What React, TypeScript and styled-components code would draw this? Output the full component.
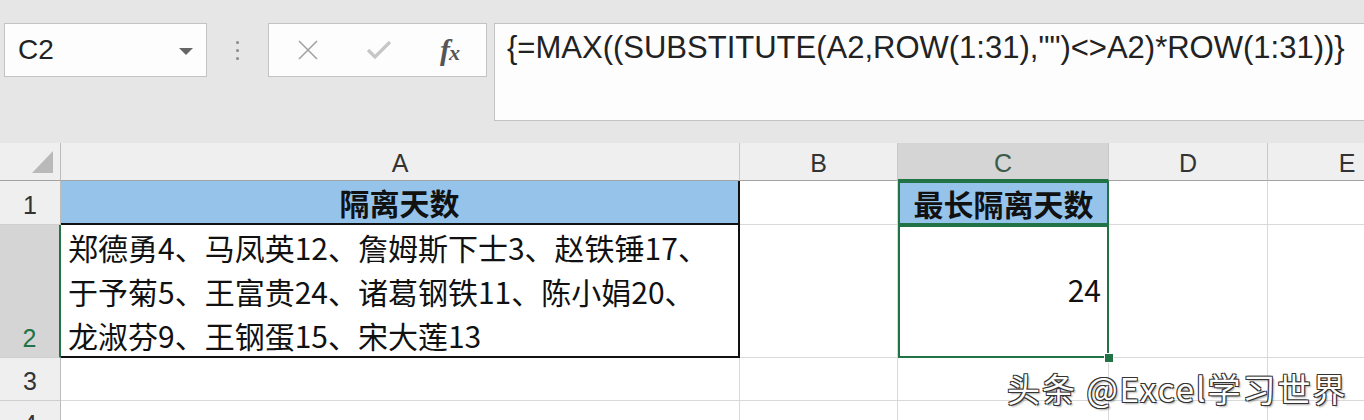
import styled, { createGlobalStyle } from "styled-components";

const GlobalStyle = createGlobalStyle`
  html, body {
    margin: 0;
    padding: 0;
    background: #ffffff;
  }
  body {
    font-family: "Liberation Sans", "Noto Sans CJK SC", sans-serif;
  }
`;

const Page = styled.div`
  position: relative;
  width: 1364px;
  height: 420px;
  overflow: hidden;
  background: #ffffff;
`;

/* ---------- formula bar area ---------- */

const Toolbar = styled.div`
  display: flex;
  align-items: flex-start;
  height: 143px;
  box-sizing: border-box;
  padding: 23px 0 0 4px;
  background: #e6e6e6;
`;

const NameBox = styled.div`
  width: 203px;
  height: 54px;
  box-sizing: border-box;
  display: flex;
  align-items: center;
  justify-content: space-between;
  padding: 0 13px 0 13px;
  background: #fdfdfd;
  border: 1px solid #c3c3c3;
  font-size: 28px;
  color: #222;
`;

const DropArrow = styled.span`
  width: 0;
  height: 0;
  border-left: 7px solid transparent;
  border-right: 7px solid transparent;
  border-top: 7px solid #666;
  margin-top: 2px;
`;

const Grip = styled.div`
  width: 61px;
  height: 54px;
  display: flex;
  flex-direction: column;
  align-items: center;
  justify-content: center;
  gap: 5px;
`;

const GripDot = styled.span`
  width: 3px;
  height: 3px;
  border-radius: 50%;
  background: #8a8a8a;
`;

const FxBox = styled.div`
  width: 219px;
  height: 54px;
  box-sizing: border-box;
  display: flex;
  align-items: center;
  padding-left: 3px;
  background: #fdfdfd;
  border: 1px solid #c3c3c3;
`;

const FxButton = styled.span`
  width: 71px;
  display: flex;
  align-items: center;
  justify-content: center;
`;

const FxLabel = styled.span`
  font-family: "Liberation Serif", serif;
  font-style: italic;
  font-weight: 700;
  font-size: 30px;
  color: #555;
  letter-spacing: -1px;

  small {
    font-size: 22px;
  }
`;

const FormulaBar = styled.div`
  flex: 1;
  height: 98px;
  margin-left: 7px;
  box-sizing: border-box;
  padding: 4px 0 0 12px;
  background: #fdfdfd;
  border: 1px solid #c3c3c3;
  border-right: none;
  font-size: 31px;
  line-height: 40px;
  color: #222;
  white-space: nowrap;
`;

/* ---------- sheet ---------- */

const Sheet = styled.div`
  display: grid;
  grid-template-columns: 61px 679px 158px 211px 159px 159px;
  grid-template-rows: 38px 44px 133px 43px 43px;
  font-family: "Noto Sans CJK SC", sans-serif;
`;

const Corner = styled.div`
  box-sizing: border-box;
  display: flex;
  align-items: flex-end;
  justify-content: flex-end;
  padding: 0 7px 7px 0;
  background: #efefef;
  border-right: 1px solid #bcbcbc;
  border-bottom: 1px solid #a3a3a3;
`;

const ColHeader = styled.div<{ $selected?: boolean }>`
  box-sizing: border-box;
  display: flex;
  justify-content: center;
  padding-top: 3px;
  font-family: "Liberation Sans", sans-serif;
  font-size: 25px;
  line-height: 34px;
  color: ${(p) => (p.$selected ? "#3b5c4b" : "#333")};
  background: ${(p) => (p.$selected ? "#d5d5d5" : "#efefef")};
  border-right: 1px solid #c9c9c9;
  border-bottom: ${(p) => (p.$selected ? "2px solid #217346" : "1px solid #a3a3a3")};
`;

const RowHeader = styled.div<{ $selected?: boolean }>`
  box-sizing: border-box;
  display: flex;
  align-items: flex-end;
  justify-content: center;
  font-family: "Liberation Sans", sans-serif;
  font-size: 25px;
  line-height: 38px;
  color: ${(p) => (p.$selected ? "#217346" : "#333")};
  background: ${(p) => (p.$selected ? "#d5d5d5" : "#efefef")};
  border-right: ${(p) => (p.$selected ? "2px solid #217346" : "1px solid #bcbcbc")};
  border-bottom: 1px solid #cfcfcf;
`;

const Cell = styled.div<{
  $fill?: boolean;
  $bold?: boolean;
  $align?: "left" | "center" | "right";
  $boxed?: boolean;
  $active?: boolean;
}>`
  position: relative;
  box-sizing: border-box;
  display: flex;
  flex-direction: column;
  justify-content: ${(p) => (p.$align === "left" ? "flex-start" : "center")};
  align-items: ${(p) =>
    p.$align === "right" ? "flex-end" : p.$align === "center" ? "center" : "flex-start"};
  padding: ${(p) =>
    p.$align === "right" ? "0 8px 6px 0" : p.$align === "left" ? "0 0 0 7px" : "0"};
  background: ${(p) => (p.$fill ? "#95c3ea" : "#ffffff")};
  font-size: 30px;
  font-weight: ${(p) => (p.$bold ? 700 : 400)};
  line-height: 44px;
  color: #111;
  white-space: nowrap;
  border-right: ${(p) => (p.$boxed ? "2px solid #111" : "1px solid #d9d9d9")};
  border-bottom: ${(p) => (p.$boxed ? "2px solid #111" : "1px solid #d9d9d9")};
  ${(p) =>
    p.$active &&
    `
    border: none;
    box-shadow: inset 0 0 0 2px #217346;
  `}
`;

const FillHandle = styled.span`
  position: absolute;
  right: -5px;
  bottom: -5px;
  width: 8px;
  height: 8px;
  background: #217346;
  border: 1px solid #ffffff;
  z-index: 2;
`;

const Watermark = styled.div`
  position: absolute;
  left: 1007px;
  top: 368px;
  font-family: "Noto Sans CJK SC", sans-serif;
  font-size: 33px;
  line-height: 40px;
  letter-spacing: 2px;
  color: #ffffff;
  white-space: nowrap;
  text-shadow: 1px 1px 0 #333, -1px -1px 0 #333, 1px -1px 0 #333, -1px 1px 0 #333,
    2px 2px 2px rgba(0, 0, 0, 0.35);
`;

const columns = ["A", "B", "C", "D", "E"];

const namesLines = [
  "郑德勇4、马凤英12、詹姆斯下士3、赵铁锤17、",
  "于予菊5、王富贵24、诸葛钢铁11、陈小娟20、",
  "龙淑芬9、王钢蛋15、宋大莲13",
];

const App = () => {
  return (
    <Page>
      <GlobalStyle />
      <Toolbar>
        <NameBox>
          <span>C2</span>
          <DropArrow />
        </NameBox>
        <Grip>
          <GripDot />
          <GripDot />
          <GripDot />
        </Grip>
        <FxBox>
          <FxButton>
            <svg width="22" height="22" viewBox="0 0 22 22">
              <path d="M2 2 L20 20 M20 2 L2 20" stroke="#a3a3a3" strokeWidth="1.6" fill="none" />
            </svg>
          </FxButton>
          <FxButton>
            <svg width="26" height="20" viewBox="0 0 26 20">
              <path d="M2 10 L9 17 L24 2" stroke="#c6c6c6" strokeWidth="3.2" fill="none" />
            </svg>
          </FxButton>
          <FxButton>
            <FxLabel>
              f<small>x</small>
            </FxLabel>
          </FxButton>
        </FxBox>
        <FormulaBar>{'{=MAX((SUBSTITUTE(A2,ROW(1:31),"")<>A2)*ROW(1:31))}'}</FormulaBar>
      </Toolbar>

      <Sheet>
        <Corner>
          <svg width="21" height="22" viewBox="0 0 21 22">
            <polygon points="21,0 21,22 0,22" fill="#b9b9b9" />
          </svg>
        </Corner>
        {columns.map((c) => (
          <ColHeader key={c} $selected={c === "C"}>
            {c}
          </ColHeader>
        ))}

        <RowHeader>1</RowHeader>
        <Cell $fill $bold $align="center" $boxed>
          隔离天数
        </Cell>
        <Cell />
        <Cell $fill $bold $align="center" $active>
          最长隔离天数
        </Cell>
        <Cell />
        <Cell />

        <RowHeader $selected>2</RowHeader>
        <Cell $align="left" $boxed>
          {namesLines.map((line) => (
            <span key={line}>{line}</span>
          ))}
        </Cell>
        <Cell />
        <Cell $align="right" $active>
          24
          <FillHandle />
        </Cell>
        <Cell />
        <Cell />

        <RowHeader>3</RowHeader>
        <Cell />
        <Cell />
        <Cell />
        <Cell />
        <Cell />

        <RowHeader>4</RowHeader>
        <Cell />
        <Cell />
        <Cell />
        <Cell />
        <Cell />
      </Sheet>

      <Watermark>头条 @Excel学习世界</Watermark>
    </Page>
  );
};

export default App;
